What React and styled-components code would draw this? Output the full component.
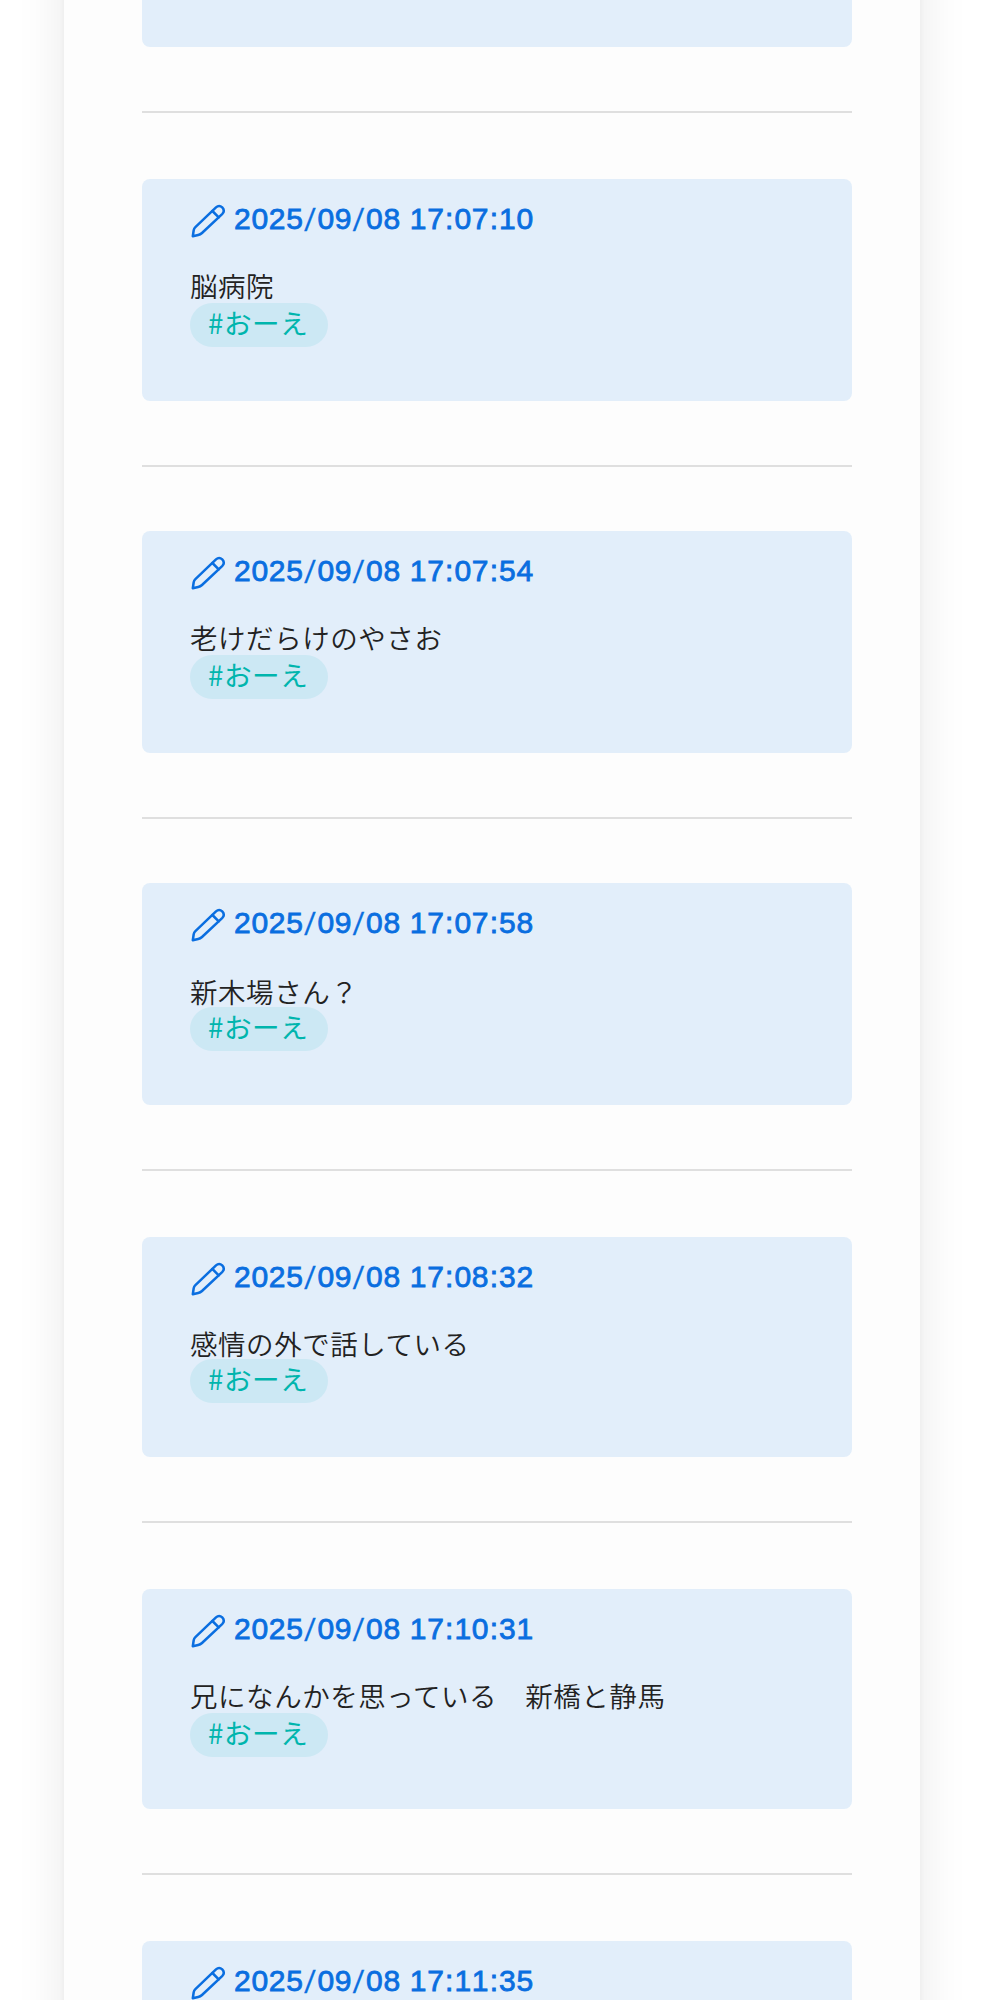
import React from "react";
import styled, { createGlobalStyle } from "styled-components";

const GlobalStyle = createGlobalStyle`
  body {
    margin: 0;
    background: #fff;
    overflow: hidden;
  }
`;

const Page = styled.div`
  height: 2000px;
  overflow: hidden;
  padding-left: 64px;
`;

const Sheet = styled.main`
  box-sizing: border-box;
  width: 856px;
  height: 2160px;
  margin-top: -80px;
  padding: 0 68px 0 78px;
  background: #fdfdfd;
  box-shadow: 0 0 48px rgba(0, 0, 0, 0.09), 0 0 6px rgba(0, 0, 0, 0.04);
  font-family: 'Noto Sans CJK JP', sans-serif;
`;

const Card = styled.section`
  box-sizing: border-box;
  height: ${(p) => p.$height}px;
  padding: 20px 48px 0;
  background: #e2eefa;
  border-radius: 8px;
`;

const Divider = styled.hr`
  height: 2px;
  margin: 64px 0 ${(p) => p.$after}px;
  border: none;
  background: #dfdfdf;
`;

const Heading = styled.h2`
  display: flex;
  align-items: center;
  height: 40px;
  margin: 0;
  color: #0a6ee0;
  font-family: 'Liberation Sans', 'Noto Sans CJK JP', sans-serif;
  font-size: 30px;
  font-weight: 400;
  font-kerning: none;
  line-height: 40px;
  letter-spacing: 0.7px;
`;

const Stamp = styled.time`
  margin-left: 8px;
  white-space: pre;
  -webkit-text-stroke: 0.8px currentColor;
`;

const Slash = styled.span`
  padding: 0 0.4px;
  font-family: Roboto, sans-serif;
  -webkit-text-stroke: 0.3px currentColor;
`;

const Colon = styled.span`
  padding: 0 0.4px;
`;

const Message = styled.p`
  margin: ${(p) => p.$lead}px 0 ${(p) => p.$gap}px;
  color: #222;
  font-size: 27.5px;
  font-weight: 350;
  line-height: 30px;
  letter-spacing: 0.55px;
  white-space: nowrap;
`;

const Tag = styled.span`
  display: flex;
  box-sizing: border-box;
  width: 138px;
  height: 44px;
  padding-left: 18px;
  border-radius: 22px;
  background: #cce8f4;
  color: #00b5ad;
  font-size: 27.6px;
  line-height: 38px;
  letter-spacing: 0.6px;
`;

const entries = [
  { time: "2025/09/08 17:07:10", text: "脳病院", height: 222, before: 66, lead: 31, gap: 3 },
  { time: "2025/09/08 17:07:54", text: "老けだらけのやさお", height: 222, before: 64, lead: 31, gap: 3 },
  { time: "2025/09/08 17:07:58", text: "新木場さん？", height: 222, before: 64, lead: 33, gap: 1 },
  { time: "2025/09/08 17:08:32", text: "感情の外で話している", height: 220, before: 66, lead: 31, gap: 1 },
  { time: "2025/09/08 17:10:31", text: "兄になんかを思っている　新橋と静馬", height: 220, before: 66, lead: 31, gap: 3 },
  { time: "2025/09/08 17:11:35", text: "", height: 222, before: 66, lead: 31, gap: 3 },
];

const Icon = styled.svg`
  margin-top: 4px;
`;

const Pencil = () => (
  <Icon width="36" height="36" viewBox="0 0 36 36" fill="none" stroke="currentColor" strokeWidth="2.5" strokeLinejoin="round" strokeLinecap="round">
    <path d="M2.8 33.2 3.7 27.2Q4 25.5 5.4 24.2L26 4.4C30.3.5 36.2 6.4 32.4 10.8L12 30Q10.3 31.6 8.2 32Z" />
    <path d="M22.4 8 28.7 14.4" />
  </Icon>
);

const DateText = ({ value }) => (
  <Stamp>
    {value.split(/([/:])/).map((part, i) => {
      if (part === "/") return <Slash key={i}>/</Slash>;
      if (part === ":") return <Colon key={i}>:</Colon>;
      return part;
    })}
  </Stamp>
);

const Entry = ({ entry }) => (
  <>
    <Divider $after={entry.before} />
    <Card $height={entry.height}>
      <Heading>
        <Pencil />
        <DateText value={entry.time} />
      </Heading>
      {entry.text && (
        <>
          <Message $lead={entry.lead} $gap={entry.gap}>{entry.text}</Message>
          <Tag>#おーえ</Tag>
        </>
      )}
    </Card>
  </>
);

const App = () => {
  return (
    <Page>
      <GlobalStyle />
      <Sheet>
        <Card $height={127} />
        {entries.map((entry) => (
          <Entry key={entry.time} entry={entry} />
        ))}
      </Sheet>
    </Page>
  );
};

export default App;
